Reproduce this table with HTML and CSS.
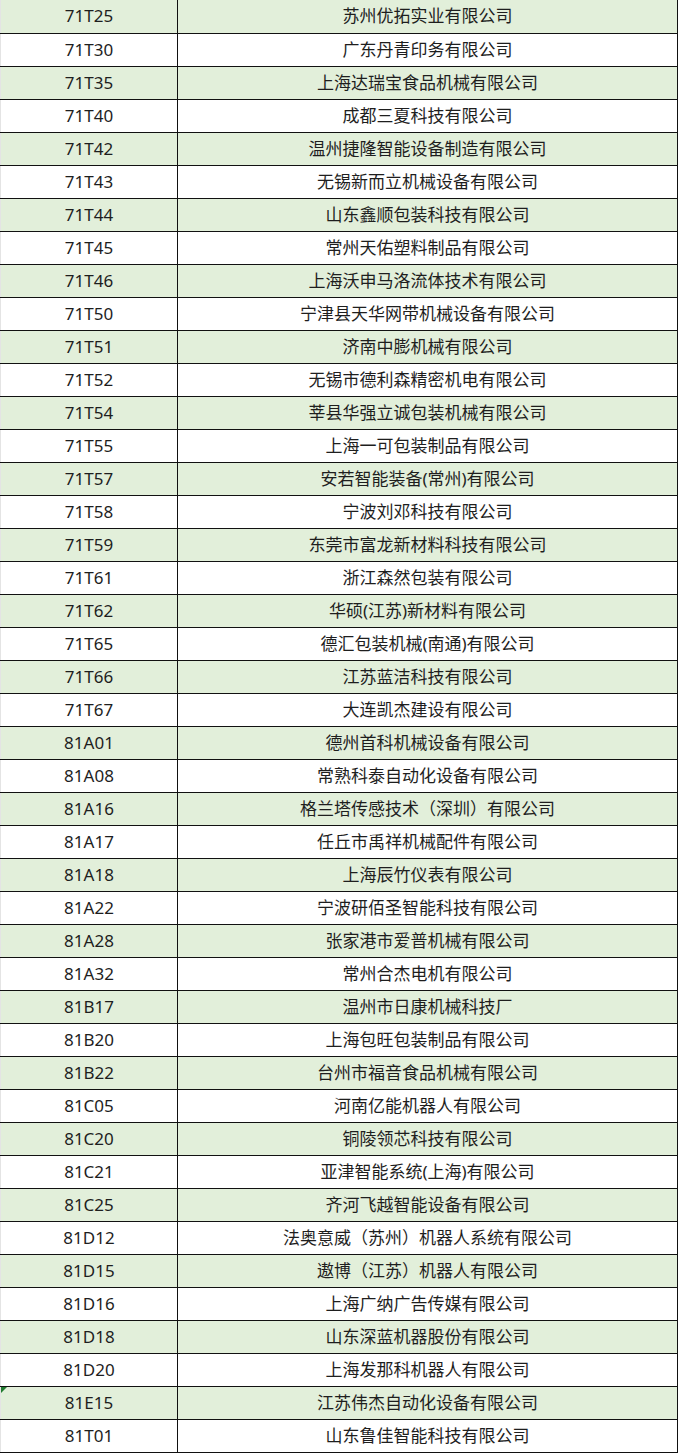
FILE: index.html
```html
<!DOCTYPE html>
<html lang="zh">
<head>
<meta charset="utf-8">
<link rel="stylesheet" href="styles.css">
</head>
<body>
<table class="grid">
<tbody>
<tr class="g"><td class="code">71T25</td><td class="name">苏州优拓实业有限公司</td></tr>
<tr><td class="code">71T30</td><td class="name">广东丹青印务有限公司</td></tr>
<tr class="g"><td class="code">71T35</td><td class="name">上海达瑞宝食品机械有限公司</td></tr>
<tr><td class="code">71T40</td><td class="name">成都三夏科技有限公司</td></tr>
<tr class="g"><td class="code">71T42</td><td class="name">温州捷隆智能设备制造有限公司</td></tr>
<tr><td class="code">71T43</td><td class="name">无锡新而立机械设备有限公司</td></tr>
<tr class="g"><td class="code">71T44</td><td class="name">山东鑫顺包装科技有限公司</td></tr>
<tr><td class="code">71T45</td><td class="name">常州天佑塑料制品有限公司</td></tr>
<tr class="g"><td class="code">71T46</td><td class="name">上海沃申马洛流体技术有限公司</td></tr>
<tr><td class="code">71T50</td><td class="name">宁津县天华网带机械设备有限公司</td></tr>
<tr class="g"><td class="code">71T51</td><td class="name">济南中膨机械有限公司</td></tr>
<tr><td class="code">71T52</td><td class="name">无锡市德利森精密机电有限公司</td></tr>
<tr class="g"><td class="code">71T54</td><td class="name">莘县华强立诚包装机械有限公司</td></tr>
<tr><td class="code">71T55</td><td class="name">上海一可包装制品有限公司</td></tr>
<tr class="g"><td class="code">71T57</td><td class="name">安若智能装备(常州)有限公司</td></tr>
<tr><td class="code">71T58</td><td class="name">宁波刘邓科技有限公司</td></tr>
<tr class="g"><td class="code">71T59</td><td class="name">东莞市富龙新材料科技有限公司</td></tr>
<tr><td class="code">71T61</td><td class="name">浙江森然包装有限公司</td></tr>
<tr class="g"><td class="code">71T62</td><td class="name">华硕(江苏)新材料有限公司</td></tr>
<tr><td class="code">71T65</td><td class="name">德汇包装机械(南通)有限公司</td></tr>
<tr class="g"><td class="code">71T66</td><td class="name">江苏蓝洁科技有限公司</td></tr>
<tr><td class="code">71T67</td><td class="name">大连凯杰建设有限公司</td></tr>
<tr class="g"><td class="code">81A01</td><td class="name">德州首科机械设备有限公司</td></tr>
<tr><td class="code">81A08</td><td class="name">常熟科泰自动化设备有限公司</td></tr>
<tr class="g"><td class="code">81A16</td><td class="name">格兰塔传感技术（深圳）有限公司</td></tr>
<tr><td class="code">81A17</td><td class="name">任丘市禹祥机械配件有限公司</td></tr>
<tr class="g"><td class="code">81A18</td><td class="name">上海辰竹仪表有限公司</td></tr>
<tr><td class="code">81A22</td><td class="name">宁波研佰圣智能科技有限公司</td></tr>
<tr class="g"><td class="code">81A28</td><td class="name">张家港市爱普机械有限公司</td></tr>
<tr><td class="code">81A32</td><td class="name">常州合杰电机有限公司</td></tr>
<tr class="g"><td class="code">81B17</td><td class="name">温州市日康机械科技厂</td></tr>
<tr><td class="code">81B20</td><td class="name">上海包旺包装制品有限公司</td></tr>
<tr class="g"><td class="code">81B22</td><td class="name">台州市福音食品机械有限公司</td></tr>
<tr><td class="code">81C05</td><td class="name">河南亿能机器人有限公司</td></tr>
<tr class="g"><td class="code">81C20</td><td class="name">铜陵领芯科技有限公司</td></tr>
<tr><td class="code">81C21</td><td class="name">亚津智能系统(上海)有限公司</td></tr>
<tr class="g"><td class="code">81C25</td><td class="name">齐河飞越智能设备有限公司</td></tr>
<tr><td class="code">81D12</td><td class="name">法奥意威（苏州）机器人系统有限公司</td></tr>
<tr class="g"><td class="code">81D15</td><td class="name">遨博（江苏）机器人有限公司</td></tr>
<tr><td class="code">81D16</td><td class="name">上海广纳广告传媒有限公司</td></tr>
<tr class="g"><td class="code">81D18</td><td class="name">山东深蓝机器股份有限公司</td></tr>
<tr><td class="code">81D20</td><td class="name">上海发那科机器人有限公司</td></tr>
<tr class="g"><td class="code flag">81E15</td><td class="name">江苏伟杰自动化设备有限公司</td></tr>
<tr><td class="code">81T01</td><td class="name">山东鲁佳智能科技有限公司</td></tr>
</tbody>
</table>
</body>
</html>
```
FILE: styles.css
```css
html, body {
  margin: 0;
  padding: 0;
  background: #ffffff;
}

.grid {
  border-collapse: collapse;
  width: 678px;
  table-layout: fixed;
  font-family: "Noto Sans", "Noto Sans CJK SC", sans-serif;
  font-size: 17px;
  color: #1e1e1e;
}

.grid tr {
  height: 33px;
}

.grid td {
  padding: 0;
  text-align: center;
  vertical-align: middle;
  border-bottom: 1px solid #111;
  line-height: 24px;
  white-space: nowrap;
}

.grid td.code {
  width: 176px;
  border-left: 1px solid #e4e4e4;
  border-right: 1px solid #111;
}

.grid td.name {
  border-right: 1px solid #111;
}

.grid tr.g td {
  background: #e2efda;
}

.grid td.flag {
  position: relative;
}

.grid td.flag::before {
  content: "";
  position: absolute;
  left: 0;
  top: 0;
  width: 0;
  height: 0;
  border-top: 6px solid #1f7a2e;
  border-right: 6px solid transparent;
}
```
